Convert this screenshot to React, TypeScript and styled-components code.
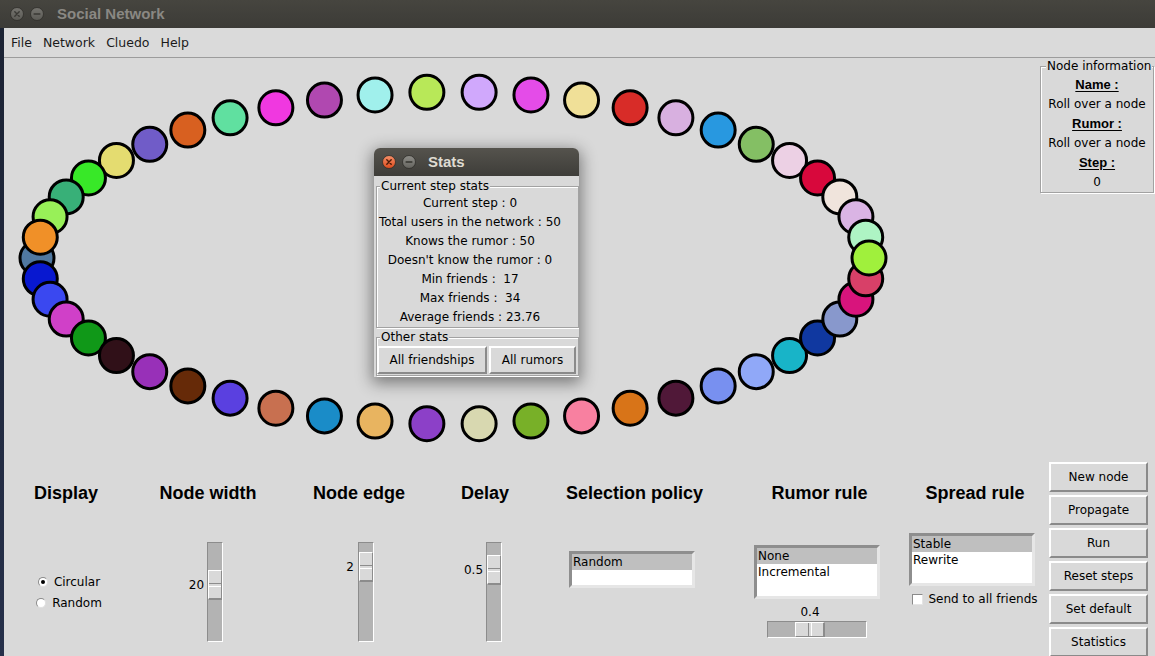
import React from "react";
import styled, { createGlobalStyle } from "styled-components";

const GlobalStyle = createGlobalStyle`
  html, body { margin: 0; padding: 0; }
  body {
    width: 1155px; height: 656px; overflow: hidden;
    background: #1f2738;
    font-family: "DejaVu Sans", sans-serif; font-size: 12px; color: #000;
  }
  * { box-sizing: border-box; }
`;

const SANS = `"DejaVu Sans", "Liberation Sans", sans-serif`;
const HEAD = `"Liberation Sans", Arial, sans-serif`;
const BG = "#d9d9d9";

/* ---------- frame ---------- */
const Screen = styled.div`
  position: relative;
  width: 1155px;
  height: 656px;
  display: flex;
  flex-direction: column;
  overflow: hidden;
  background: #1f2738;
`;

const TitleBar = styled.div`
  height: 28px;
  flex: none;
  display: flex;
  align-items: center;
  gap: 6px;
  padding-left: 10px;
  background: linear-gradient(#46453f, #3c3b37);
`;

const TitleText = styled.span<{ $active?: boolean }>`
  margin-left: ${(p) => (p.$active ? 6 : 7)}px;
  font: bold 15px/18px ${HEAD};
  color: ${(p) => (p.$active ? "#dfdbd2" : "#8a8883")};
`;

const Below = styled.div`
  flex: 1;
  display: flex;
  min-height: 0;
`;

const DesktopEdge = styled.div`
  width: 4px;
  flex: none;
  background: linear-gradient(#1c2334, #26304a);
`;

const Window = styled.div`
  flex: 1;
  display: flex;
  flex-direction: column;
  background: ${BG};
  min-width: 0;
`;

const MenuBar = styled.div`
  height: 30px;
  flex: none;
  display: flex;
  align-items: center;
  padding-left: 1.5px;
  background: #dadada;
  border-bottom: 1px solid #9c9c9c;
`;

const MenuItem = styled.span`
  padding: 0 5.5px;
  font: 12.5px/16px ${SANS};
  color: #1a1a1a;
`;

const Main = styled.div`
  flex: 1;
  display: grid;
  grid-template-columns: 1036px 115px;
  grid-template-rows: 397px 1fr;
`;

/* ---------- graph canvas ---------- */
const Canvas = styled.div`
  grid-column: 1;
  grid-row: 1;
`;

const Graph = styled.svg`
  display: block;
`;

const COLORS = [
  "#d0a8fc", "#e44ce8", "#f0e098", "#d82c28", "#d8b0e0", "#2898e0", "#84bf64", "#ecd0e4",
  "#d8083c", "#f0e4dc", "#dab4e4", "#aef4c4", "#a0f03c", "#d84068", "#d8147c", "#8898cc",
  "#1038a0", "#18b4c8", "#90a8f8", "#7890f0", "#501838", "#d87418", "#f880a0", "#78b028",
  "#d8d8b0", "#8c40c8", "#e8b460", "#1a8cc8", "#c87050", "#5a40e0", "#662a08", "#9830b8",
  "#301018", "#109818", "#d040c8", "#3a48f0", "#0818d0", "#5078a0", "#f09028", "#98f058",
  "#38b078", "#38e828", "#e4dc70", "#705cc8", "#d86020", "#60e0a0", "#f038e0", "#b048b0",
  "#a0f0ec", "#b8e858",
];

const CX = 449;
const CY = 200;
const RX = 416;
const RY = 166;

const ORDER: number[] = [];
for (let i = 37; i >= 13; i--) ORDER.push(i);
for (let i = 49; i >= 38; i--) ORDER.push(i);
for (let i = 0; i <= 12; i++) ORDER.push(i);

function nodePos(i: number) {
  const phi = ((3.6 + 7.2 * i) * Math.PI) / 180;
  return { x: CX + RX * Math.sin(phi), y: CY - RY * Math.cos(phi) };
}

/* ---------- titled group (etched) ---------- */
const Group = styled.fieldset<{ $w?: number; $gapTop?: number }>`
  margin: ${(p) => p.$gapTop ?? 0}px 0 0 0;
  padding: 0;
  min-width: 0;
  width: ${(p) => (p.$w ? `${p.$w}px` : "auto")};
  border: 1px solid #a2a2a2;
  box-shadow: inset 1px 1px 0 #fff, 1px 1px 0 #fff;
`;

const Legend = styled.legend<{ $indent?: number }>`
  margin-left: ${(p) => p.$indent ?? 3}px;
  padding: 0 1px;
  font: 12px/14px ${SANS};
  background: ${BG};
`;

/* ---------- node information ---------- */
const InfoCell = styled.div`
  grid-column: 2;
  grid-row: 1;
  padding-top: 1px;
`;

const InfoRow = styled.div<{ $head?: boolean }>`
  height: 19.5px;
  text-align: center;
  font: ${(p) => (p.$head ? `bold 13px/19.5px ${HEAD}` : `12px/19.5px ${SANS}`)};
  text-decoration: ${(p) => (p.$head ? "underline" : "none")};
  text-underline-offset: 2px;
`;

const InfoBody = styled.div`
  padding-top: 2px;
`;

/* ---------- controls ---------- */
const Controls = styled.div`
  grid-column: 1;
  grid-row: 2;
  display: flex;
`;

const Column = styled.div<{ $w: number }>`
  width: ${(p) => p.$w}px;
  flex: none;
  display: flex;
  flex-direction: column;
  align-items: center;
  padding-top: 27px;
`;

const Heading = styled.div`
  font: bold 18px/22px ${HEAD};
  color: #000;
  white-space: nowrap;
`;

const ColBody = styled.div<{ $top: number; $shift?: number }>`
  margin-top: ${(p) => p.$top}px;
  margin-left: ${(p) => (p.$shift ?? 0) * 2}px;
  display: flex;
  flex-direction: column;
  align-items: center;
`;

const RadioRow = styled.label`
  display: flex;
  align-items: center;
  gap: 6px;
  height: 21px;
  font: 12px/14px ${SANS};
`;

const RadioDot = styled.span<{ $on?: boolean }>`
  width: 10px;
  height: 10px;
  border-radius: 50%;
  background: #fff;
  border: 1px solid;
  border-color: #8a8a8a #e0e0e0 #e0e0e0 #8a8a8a;
  display: flex;
  align-items: center;
  justify-content: center;
  &::after {
    content: "";
    width: 4px;
    height: 4px;
    border-radius: 50%;
    background: ${(p) => (p.$on ? "#000" : "transparent")};
  }
`;

const SliderRow = styled.div`
  display: flex;
  align-items: flex-start;
`;

const SliderValue = styled.span<{ $top: number; $gap: number }>`
  margin-top: ${(p) => p.$top}px;
  margin-right: ${(p) => p.$gap}px;
  font: 12px/14px ${SANS};
`;

const VTrack = styled.div`
  width: 16px;
  height: 100px;
  background: #b3b3b3;
  border-style: solid;
  border-width: 1px;
  border-color: #8c8c8c #fff #fff #8c8c8c;
  display: flex;
  flex-direction: column;
`;

const VThumb = styled.div<{ $offset: number }>`
  margin-top: ${(p) => p.$offset}px;
  width: 14px;
  height: 30px;
  background: ${BG};
  border-style: solid;
  border-width: 1px 1px 2px 1px;
  border-color: #fff #8c8c8c #8c8c8c #fff;
  display: flex;
  flex-direction: column;
  justify-content: center;
  &::after {
    content: "";
    height: 2px;
    border-top: 1px solid #8c8c8c;
    border-bottom: 1px solid #fff;
  }
`;

const HTrack = styled.div`
  width: 100px;
  height: 17px;
  background: #b3b3b3;
  border-style: solid;
  border-width: 1px;
  border-color: #8c8c8c #fff #fff #8c8c8c;
  display: flex;
`;

const HThumb = styled.div<{ $offset: number }>`
  margin-left: ${(p) => p.$offset}px;
  width: 30px;
  height: 15px;
  background: ${BG};
  border-style: solid;
  border-width: 1px 2px 1px 1px;
  border-color: #fff #8c8c8c #8c8c8c #fff;
  display: flex;
  justify-content: center;
  &::after {
    content: "";
    width: 2px;
    border-left: 1px solid #8c8c8c;
    border-right: 1px solid #fff;
  }
`;

const HLabelRow = styled.div<{ $offset: number }>`
  width: 100px;
  padding-left: ${(p) => p.$offset}px;
  margin-top: 6px;
  margin-bottom: 2px;
  font: 12px/14px ${SANS};
`;

const HLabel = styled.div`
  width: 30px;
  text-align: center;
`;

const List = styled.div<{ $h: number; $shift?: number }>`
  width: 126px;
  height: ${(p) => p.$h}px;
  margin-left: ${(p) => (p.$shift ?? 0) * 2}px;
  background: #fff;
  border-style: solid;
  border-width: 3px;
  border-color: #8e8e8e #e6e6e6 #e6e6e6 #8e8e8e;
`;

const ListItem = styled.div<{ $sel?: boolean }>`
  height: 16px;
  padding-left: 1px;
  font: 12px/16px ${SANS};
  background: ${(p) => (p.$sel ? "#bfbfbf" : "transparent")};
`;

const CheckRow = styled.label`
  display: flex;
  align-items: center;
  gap: 5px;
  margin-top: 6px;
  font: 12px/14px ${SANS};
`;

const CheckBox = styled.span`
  width: 11px;
  height: 11px;
  background: #fff;
  border: 1px solid;
  border-color: #8a8a8a #e4e4e4 #e4e4e4 #8a8a8a;
`;

/* ---------- buttons ---------- */
const ButtonCol = styled.div`
  grid-column: 2;
  grid-row: 2;
  display: flex;
  flex-direction: column;
  gap: 3px;
  padding: 7px 0 0 9px;
`;

const Button = styled.button<{ $w?: number; $h?: number }>`
  width: ${(p) => p.$w ?? 99}px;
  height: ${(p) => p.$h ?? 30}px;
  flex: none;
  padding: 0;
  background: ${BG};
  border-style: solid;
  border-width: 2px;
  border-color: #fff #8a8a8a #8a8a8a #fff;
  font: 12px/14px ${SANS};
  color: #000;
  text-align: center;
`;

/* ---------- stats dialog ---------- */
const Dialog = styled.div`
  position: absolute;
  left: 374px;
  top: 148px;
  width: 205px;
  height: 229px;
  display: flex;
  flex-direction: column;
  border-radius: 6px 6px 0 0;
  box-shadow: 0 4px 16px 2px rgba(0, 0, 0, 0.45);
  overflow: hidden;
`;

const DialogTitle = styled.div`
  height: 28px;
  flex: none;
  display: flex;
  align-items: center;
  gap: 6px;
  padding-left: 8px;
  background: linear-gradient(#55534d, #3e3d39);
`;

const DialogBody = styled.div`
  flex: 1;
  background: ${BG};
  padding: 3px 0 0 2px;
  display: flex;
  flex-direction: column;
`;

const StatList = styled.div`
  padding: 1px 15px 0 0;
`;

const StatRow = styled.div`
  height: 19px;
  font: 12px/19px ${SANS};
  text-align: center;
  white-space: pre;
`;

const StatButtons = styled.div`
  display: flex;
  gap: 2px;
  padding: 2px 0 1px 0;
`;

/* ---------- window glyph buttons ---------- */
function WinButton({ kind, active }: { kind: "close" | "min"; active?: boolean }) {
  const id = `${kind}-${active ? "a" : "i"}`;
  const top = active ? (kind === "close" ? "#f6916a" : "#8f8e89") : "#75746f";
  const bot = active ? (kind === "close" ? "#dc4a1c" : "#64635e") : "#5b5a55";
  const ink = active ? (kind === "close" ? "#4a1a08" : "#35342f") : "#3a3935";
  return (
    <svg width="14" height="14" viewBox="0 0 14 14">
      <defs>
        <linearGradient id={id} x1="0" y1="0" x2="0" y2="1">
          <stop offset="0" stopColor={top} />
          <stop offset="1" stopColor={bot} />
        </linearGradient>
      </defs>
      <circle cx="7" cy="7" r="6.5" fill={`url(#${id})`} stroke="#2e2d2a" strokeWidth="0.8" />
      {kind === "close" ? (
        <path d="M4.8 4.8 L9.2 9.2 M9.2 4.8 L4.8 9.2" stroke={ink} strokeWidth="1.4" strokeLinecap="round" />
      ) : (
        <path d="M4.2 7 H9.8" stroke={ink} strokeWidth="1.6" strokeLinecap="round" />
      )}
    </svg>
  );
}

function VSlider({ value, offset, gap }: { value: string; offset: number; gap: number }) {
  return (
    <SliderRow>
      <SliderValue $top={offset + 9} $gap={gap}>{value}</SliderValue>
      <VTrack>
        <VThumb $offset={offset} />
      </VTrack>
    </SliderRow>
  );
}

const STATS = [
  "Current step : 0",
  "Total users in the network : 50",
  "Knows the rumor : 50",
  "Doesn't know the rumor : 0",
  "Min friends :  17",
  "Max friends :  34",
  "Average friends : 23.76",
];

export default function App() {
  return (
    <>
      <GlobalStyle />
      <Screen>
        <TitleBar>
          <WinButton kind="close" />
          <WinButton kind="min" />
          <TitleText>Social Network</TitleText>
        </TitleBar>
        <Below>
          <DesktopEdge />
          <Window>
            <MenuBar>
              <MenuItem>File</MenuItem>
              <MenuItem>Network</MenuItem>
              <MenuItem>Cluedo</MenuItem>
              <MenuItem>Help</MenuItem>
            </MenuBar>
            <Main>
              <Canvas>
                <Graph width="1036" height="397" viewBox="0 0 1036 397">
                  {ORDER.map((i) => {
                    const { x, y } = nodePos(i);
                    return (
                      <circle
                        key={i}
                        cx={x}
                        cy={y}
                        r="17"
                        fill={COLORS[i]}
                        stroke="#000"
                        strokeWidth="3"
                      />
                    );
                  })}
                </Graph>
              </Canvas>

              <InfoCell>
                <Group $w={114}>
                  <Legend $indent={5}>Node information</Legend>
                  <InfoBody>
                    <InfoRow $head>Name :</InfoRow>
                    <InfoRow>Roll over a node</InfoRow>
                    <InfoRow $head>Rumor :</InfoRow>
                    <InfoRow>Roll over a node</InfoRow>
                    <InfoRow $head>Step :</InfoRow>
                    <InfoRow>0</InfoRow>
                  </InfoBody>
                </Group>
              </InfoCell>

              <Controls>
                <Column $w={124}>
                  <Heading>Display</Heading>
                  <ColBody $top={67} $shift={3}>
                    <RadioRow>
                      <RadioDot $on />
                      Circular
                    </RadioRow>
                    <RadioRow>
                      <RadioDot />
                      Random
                    </RadioRow>
                  </ColBody>
                </Column>
                <Column $w={160}>
                  <Heading>Node width</Heading>
                  <ColBody $top={38} $shift={-2}>
                    <VSlider value="20" offset={27} gap={3} />
                  </ColBody>
                </Column>
                <Column $w={142}>
                  <Heading>Node edge</Heading>
                  <ColBody $top={38} $shift={1}>
                    <VSlider value="2" offset={9} gap={4} />
                  </ColBody>
                </Column>
                <Column $w={110}>
                  <Heading>Delay</Heading>
                  <ColBody $top={38} $shift={-2}>
                    <VSlider value="0.5" offset={12} gap={3} />
                  </ColBody>
                </Column>
                <Column $w={189}>
                  <Heading>Selection policy</Heading>
                  <ColBody $top={47} $shift={-2.5}>
                    <List $h={37}>
                      <ListItem $sel>Random</ListItem>
                    </List>
                  </ColBody>
                </Column>
                <Column $w={181}>
                  <Heading>Rumor rule</Heading>
                  <ColBody $top={41} $shift={-2.5}>
                    <List $h={54}>
                      <ListItem $sel>None</ListItem>
                      <ListItem>Incremental</ListItem>
                    </List>
                    <HLabelRow $offset={28}>
                      <HLabel>0.4</HLabel>
                    </HLabelRow>
                    <HTrack>
                      <HThumb $offset={27} />
                    </HTrack>
                  </ColBody>
                </Column>
                <Column $w={130}>
                  <Heading>Spread rule</Heading>
                  <ColBody $top={29}>
                    <List $h={53} $shift={-3}>
                      <ListItem $sel>Stable</ListItem>
                      <ListItem>Rewrite</ListItem>
                    </List>
                    <CheckRow>
                      <CheckBox />
                      Send to all friends
                    </CheckRow>
                  </ColBody>
                </Column>
              </Controls>

              <ButtonCol>
                <Button>New node</Button>
                <Button>Propagate</Button>
                <Button>Run</Button>
                <Button>Reset steps</Button>
                <Button>Set default</Button>
                <Button>Statistics</Button>
              </ButtonCol>
            </Main>
          </Window>
        </Below>

        <Dialog>
          <DialogTitle>
            <WinButton kind="close" active />
            <WinButton kind="min" active />
            <TitleText $active>Stats</TitleText>
          </DialogTitle>
          <DialogBody>
            <Group $w={203}>
              <Legend>Current step stats</Legend>
              <StatList>
                {STATS.map((s) => (
                  <StatRow key={s}>{s}</StatRow>
                ))}
              </StatList>
            </Group>
            <Group $w={203} $gapTop={2}>
              <Legend>Other stats</Legend>
              <StatButtons>
                <Button $w={110} $h={28}>All friendships</Button>
                <Button $w={87} $h={28}>All rumors</Button>
              </StatButtons>
            </Group>
          </DialogBody>
        </Dialog>
      </Screen>
    </>
  );
}
